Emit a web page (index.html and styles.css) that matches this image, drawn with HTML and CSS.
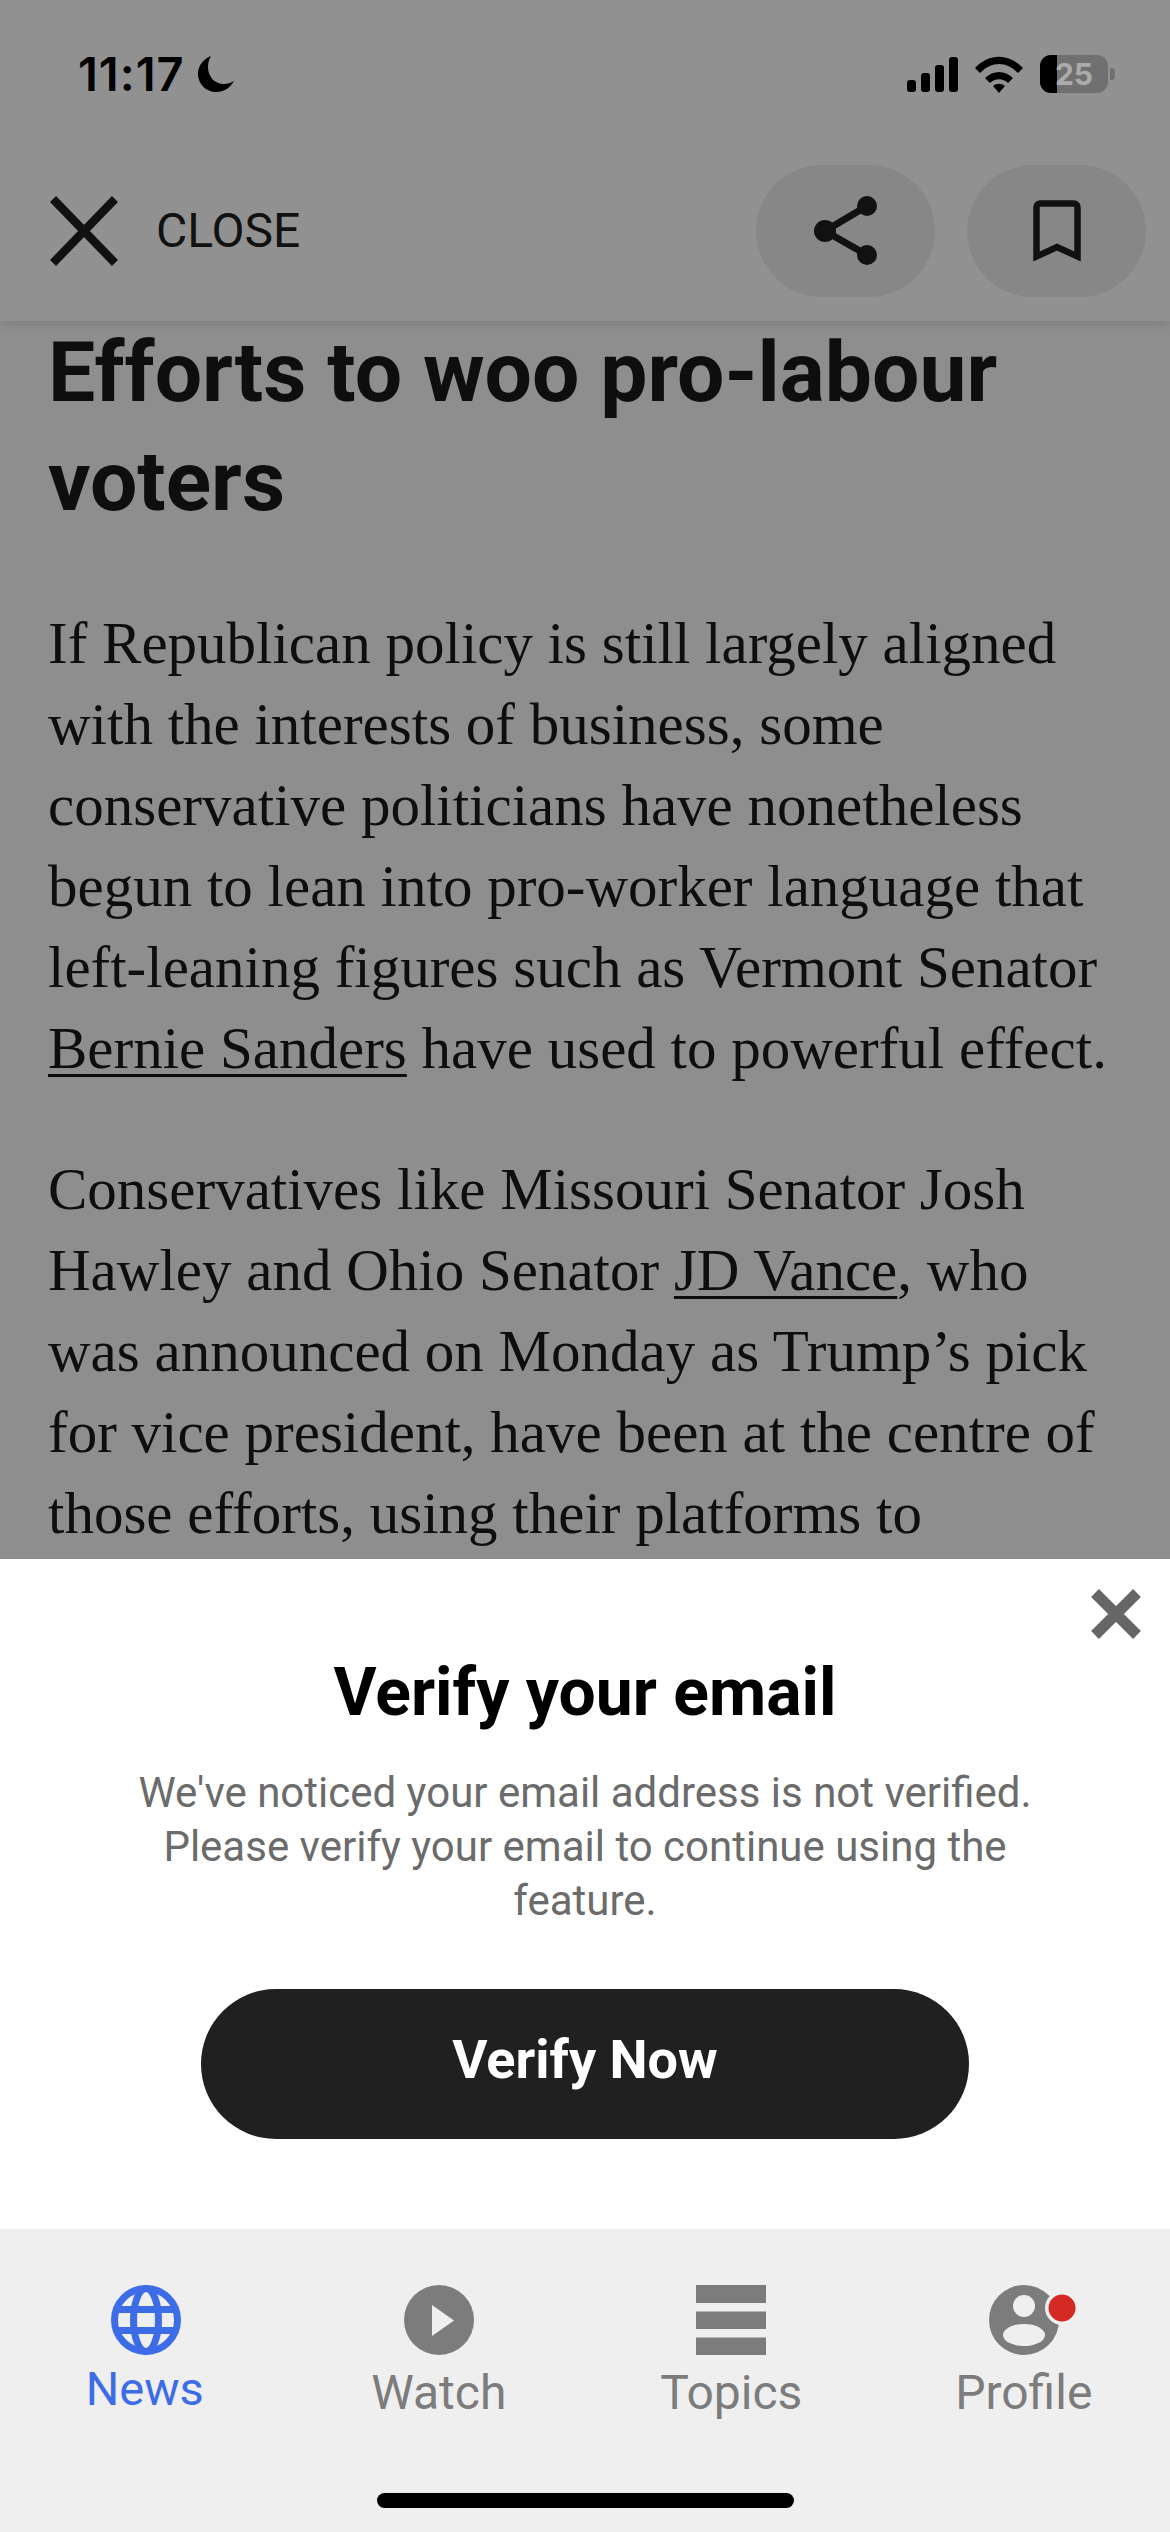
FILE: index.html
```html
<!DOCTYPE html>
<html lang="en">
<head>
<meta charset="utf-8">
<title>Article</title>
<link rel="stylesheet" href="styles.css">
</head>
<body>
<div class="screen">
  <div class="page">
    <header class="topbar">
      <div class="toolbar">
        <div class="close-action">
          <svg class="close-icon" viewBox="0 0 68 70"><path d="M3 3l62 64M65 3L3 67"/></svg>
          <span class="close-label">CLOSE</span>
        </div>
        <div class="actions">
          <div class="round-btn">
            <svg class="share-icon" viewBox="0 0 64 70"><path class="link" d="M53 10L11 35l42 24"/><circle cx="53" cy="10" r="10"/><circle cx="11" cy="35" r="11"/><circle cx="53" cy="59" r="10"/></svg>
          </div>
          <div class="round-btn">
            <svg class="bookmark-icon" viewBox="0 0 48 62"><path d="M3.500 56.500V7A3.500 3.500 0 0 1 7 3.500H41A3.500 3.500 0 0 1 44.500 7V56.500L24 47z"/></svg>
          </div>
        </div>
      </div>
    </header>
    <article class="article">
      <h2 class="headline">Efforts to woo pro-labour<br>voters</h2>
      <p class="para">If Republican policy is still largely aligned<br>with the interests of business, some<br>conservative politicians have nonetheless<br>begun to lean into pro-worker language that<br>left-leaning figures such as Vermont Senator<br><a class="ref">Bernie Sanders</a> have used to powerful effect.</p>
      <p class="para">Conservatives like Missouri Senator Josh<br>Hawley and Ohio Senator <a class="ref">JD Vance</a>, who<br>was announced on Monday as Trump’s pick<br>for vice president, have been at the centre of<br>those efforts, using their platforms to</p>
    </article>
    <div class="scrim"></div>
  </div>
  <div class="status">
    <div class="status-left">
      <span class="clock">11:17</span>
      <svg class="moon" viewBox="0 0 36 36"><path d="M13 0C5 3 0 10 0 18c0 10 8 18 18 18 8 0 14-4 18-11-3 2-7 3-10 3C16 28 10 20 10 11c0-4 1-8 3-11z"/></svg>
    </div>
    <div class="status-right">
      <svg class="signal" viewBox="0 0 51 35"><rect x="0" y="23" width="9" height="12" rx="3"/><rect x="14" y="16" width="9" height="19" rx="3"/><rect x="28" y="8" width="9" height="27" rx="3"/><rect x="42" y="0" width="9" height="35" rx="3"/></svg>
      <svg class="wifi" viewBox="0 0 48 37"><path d="M0 12C14-3 34-3 48 12l-5 5C31 5 17 5 5 17z"/><path d="M10 22c8-8 20-8 28 0l-5 5c-5-5-13-5-18 0z"/><path d="M18 30c4-3 8-3 12 0l-6 7z"/></svg>
      <div class="battery">
        <div class="battery-body"><span class="battery-fill"></span><span class="battery-level">25</span></div>
        <span class="battery-cap"></span>
      </div>
    </div>
  </div>
  <section class="sheet">
    <svg class="sheet-close" viewBox="0 0 50 50"><path d="M4 4l42 42M46 4L4 46"/></svg>
    <h3 class="sheet-title">Verify your email</h3>
    <p class="sheet-text">We've noticed your email address is not verified. Please verify your email to continue using the feature.</p>
    <button class="verify-btn">Verify Now</button>
  </section>
  <nav class="tabbar">
    <div class="tab tab-active">
      <svg class="tab-icon" viewBox="0 0 70 70"><circle cx="35" cy="35" r="31.500" class="globe-line"/><ellipse cx="35" cy="35" rx="12.500" ry="31.500" class="globe-line"/><path class="globe-line" d="M6 24.500h58M6 45.500h58"/></svg>
      <span class="tab-label">News</span>
    </div>
    <div class="tab">
      <svg class="tab-icon" viewBox="0 0 70 70"><circle cx="35" cy="35" r="35" class="fill"/><path d="M28 20l22 15.500L28 51z" class="cut"/></svg>
      <span class="tab-label">Watch</span>
    </div>
    <div class="tab">
      <svg class="tab-icon" viewBox="0 0 70 70"><path class="fill" d="M0 0h70v18H0zM0 26.500h70v17.500H0zM0 52.500h70V70H0z"/></svg>
      <span class="tab-label">Topics</span>
    </div>
    <div class="tab">
      <svg class="tab-icon" viewBox="0 0 70 70"><circle cx="35" cy="35" r="35" class="fill"/><circle cx="35" cy="21" r="11" class="cut"/><ellipse cx="35" cy="50" rx="21" ry="11" class="cut"/><circle cx="73" cy="23" r="17" class="cut"/><circle cx="73" cy="23" r="13.500" class="dot"/></svg>
      <span class="tab-label">Profile</span>
    </div>
  </nav>
  <div class="home-bar"></div>
</div>
</body>
</html>
```
FILE: styles.css
```css
* { box-sizing: border-box; }
html, body { margin: 0; padding: 0; }
body { width: 1170px; height: 2532px; overflow: hidden; font-family: Roboto, sans-serif; }
.screen { position: relative; width: 1170px; height: 2532px; background: #fff; }

/* article behind the sheet, dimmed as one layer */
.page { position: relative; height: 1559px; overflow: hidden; background: #fafafa; }
.scrim { position: absolute; inset: 0; z-index: 2; background: rgba(0,0,0,.43); }

.topbar { position: relative; z-index: 1; height: 321px; padding-top: 165px; background: #fff; box-shadow: 0 3px 10px rgba(0,0,0,.12); }
.toolbar { height: 132px; display: flex; justify-content: space-between; align-items: center; padding: 0 24px 0 50px; }
.close-action { display: flex; align-items: center; gap: 38px; }
.close-icon { width: 68px; height: 70px; fill: none; stroke: #1f1f1f; stroke-width: 8.500; }
.close-label { font: 400 48px/54px Roboto, sans-serif; color: #1f1f1f; }
.actions { display: flex; gap: 32px; }
.round-btn { width: 179px; height: 132px; border-radius: 66px; background: #eeeeee; display: flex; align-items: center; justify-content: center; }
.share-icon { width: 64px; height: 70px; fill: #1f1f1f; }
.share-icon .link { fill: none; stroke: #1f1f1f; stroke-width: 7; }
.bookmark-icon { width: 48px; height: 62px; fill: none; stroke: #1f1f1f; stroke-width: 6.500; }

.article { padding-left: 48px; margin-top: -3px; white-space: nowrap; }
.headline { margin: 0 0 67px; font: 700 84px/109px Roboto, sans-serif; color: #191919; }
.para { margin: 0 0 60px; font: 400 59px/81px "Liberation Serif", serif; color: #1a1a1a; }
.ref { text-decoration: underline; text-underline-offset: 6px; text-decoration-thickness: 3px; color: inherit; }

/* system status row, not affected by the dimming */
.status { position: absolute; left: 0; right: 0; top: 55px; height: 38px; z-index: 3; display: flex; justify-content: space-between; align-items: center; padding: 0 55px 0 78px; }
.status-left { display: flex; align-items: center; gap: 13px; }
.clock { font: 600 47px/38px Inter, Roboto, sans-serif; letter-spacing: 1px; color: #000; }
.moon { width: 36px; height: 36px; fill: #000; }
.status-right { display: flex; align-items: center; gap: 17px; }
.signal { width: 51px; height: 35px; fill: #000; }
.wifi { width: 48px; height: 37px; fill: #000; }
.battery { display: flex; align-items: center; gap: 2px; }
.battery-body { position: relative; width: 68px; height: 38px; border-radius: 11px; background: #707070; overflow: hidden; display: flex; align-items: center; justify-content: center; }
.battery-fill { position: absolute; left: 0; top: 0; bottom: 0; width: 17px; background: #000; }
.battery-level { position: relative; font: 700 30px/38px Inter, Roboto, sans-serif; color: #ababab; }
.battery-cap { width: 5px; height: 12px; border-radius: 0 4px 4px 0; background: #707070; }

/* verification sheet */
.sheet { position: absolute; left: 0; right: 0; top: 1559px; height: 670px; background: #fff; border-radius: 36px 36px 0 0; display: flex; flex-direction: column; align-items: center; padding-top: 95px; }
.sheet-close { position: absolute; right: 29px; top: 30px; width: 50px; height: 50px; fill: none; stroke: #666; stroke-width: 11; }
.sheet-title { margin: 0; font: 700 66px/78px Roboto, sans-serif; color: #000; }
.sheet-text { width: 920px; margin: 34px 0 0; text-align: center; font: 400 42px/54px Roboto, sans-serif; color: #6b6b6b; }
.verify-btn { width: 768px; height: 150px; margin-top: 61px; padding: 0 0 8px; border: none; border-radius: 75px; background: #202020; color: #fff; font: 700 54px/60px Roboto, sans-serif; }

/* bottom navigation */
.tabbar { position: absolute; left: 0; right: 0; top: 2229px; height: 303px; background: #efeff0; display: grid; grid-template-columns: repeat(4, 1fr); padding-top: 56px; }
.tab { display: flex; flex-direction: column; align-items: center; }
.tab-icon { width: 70px; height: 70px; overflow: visible; }
.tab-label { margin-top: 10px; font: 400 48px/56px Roboto, sans-serif; color: #7c7c7c; }
.tab-active .tab-label { margin-top: 6px; margin-right: 3px; font-size: 47px; color: #3c6ce6; }
.fill { fill: #7c7c7c; }
.cut { fill: #efeff0; }
.dot { fill: #d32b24; }
.globe-line { fill: none; stroke: #3c6ce6; stroke-width: 7; }
.home-bar { position: absolute; left: 377px; top: 2493px; width: 417px; height: 15px; border-radius: 8px; background: #000; }
```
